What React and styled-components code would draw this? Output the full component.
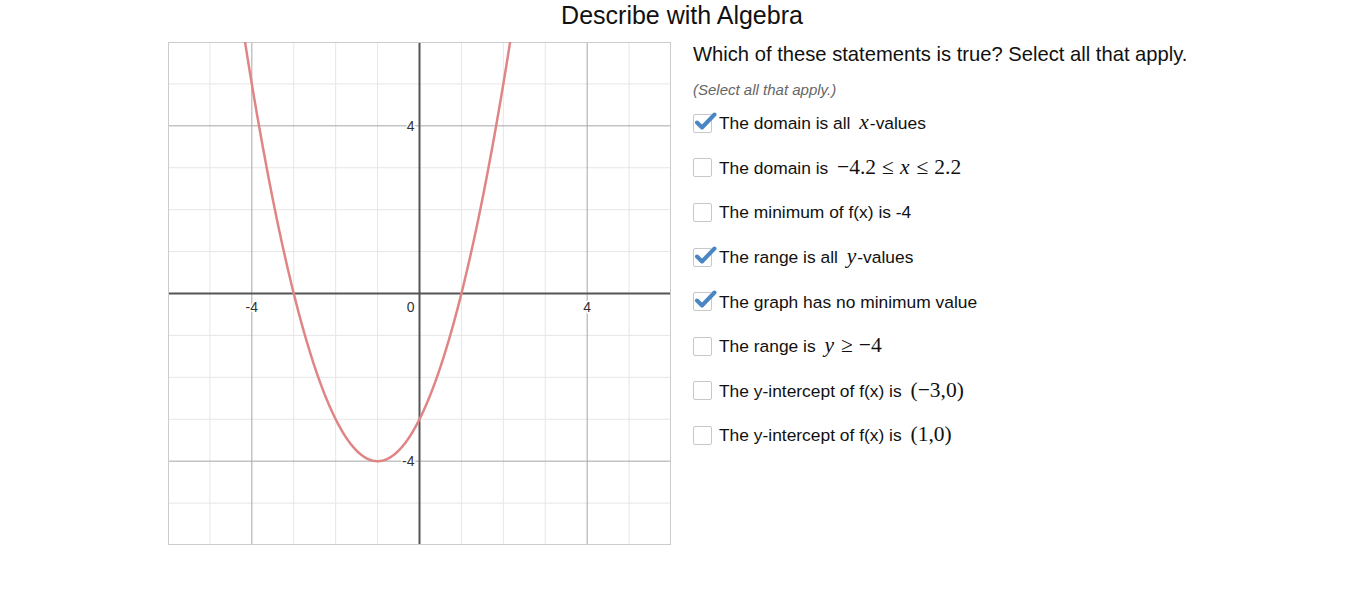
import React from 'react'
import styled, { createGlobalStyle } from 'styled-components'

const GlobalStyle = createGlobalStyle`
  body {
    margin: 0;
    background: #fff;
    font-family: "Liberation Sans", Arial, sans-serif;
    color: #111;
  }
`

const SIZE = 503
const UNIT = SIZE / 12
const px = x => (x + 6) * UNIT
const py = y => (6 - y) * UNIT

const curve = () => {
  const pts = []
  for (let x = -6; x <= 6.001; x += 0.02) {
    const y = x * x + 2 * x - 3
    if (y > 6.5) continue
    pts.push(`${px(x).toFixed(2)},${py(y).toFixed(2)}`)
  }
  return 'M' + pts.join(' L')
}

const GraphBox = styled.svg`
  display: block;
  flex: none;
`

const Title = styled.h1`
  margin: 0;
  font-size: 25px;
  font-weight: normal;
  line-height: 30px;
  text-align: center;
  color: #111;
`

const Main = styled.div`
  display: flex;
  gap: 22px;
  padding: 12px 0 0 168px;
`

const Panel = styled.div`
  display: flex;
  flex-direction: column;
`

const Question = styled.div`
  font-size: 20.2px;
  line-height: 24px;
  color: #111;
`

const Hint = styled.div`
  font-size: 15px;
  line-height: 17px;
  font-style: italic;
  color: #666;
  margin-top: 15px;
`

const List = styled.div`
  display: flex;
  flex-direction: column;
  margin-top: 3px;
`

const Row = styled.div`
  display: flex;
  align-items: center;
  height: 44.6px;
`

const Box = styled.span`
  position: relative;
  flex: none;
  width: 17px;
  height: 17px;
  border: 1px solid #c8c8c8;
  border-radius: 2px;
  margin-right: 7px;
  background: #fff;
`

const Tick = styled.svg`
  position: absolute;
  left: -1px;
  top: -5px;
`

const Label = styled.span`
  font-size: 17.4px;
  line-height: 24px;
  color: #111;
  white-space: nowrap;
`

const MathText = styled.span`
  font-family: "Liberation Serif", "Times New Roman", serif;
  font-size: 21.5px;
  line-height: 20px;
  margin-left: 4px;
`

const Var = styled.i`
  font-family: "Liberation Serif", "Times New Roman", serif;
  margin-right: 1px;
`

const Rel = styled.span`
  margin: 0 6px;
`

const items = [
  { checked: true, text: 'The domain is all ', math: <Var>x</Var>, after: '-values' },
  { checked: false, text: 'The domain is ', math: <>−4.2<Rel>≤</Rel><Var>x</Var><Rel>≤</Rel>2.2</> },
  { checked: false, text: 'The minimum of f(x) is -4' },
  { checked: true, text: 'The range is all ', math: <Var>y</Var>, after: '-values' },
  { checked: true, text: 'The graph has no minimum value' },
  { checked: false, text: 'The range is ', math: <><Var>y</Var><Rel>≥</Rel>−4</> },
  { checked: false, text: 'The y-intercept of f(x) is ', math: <>(−3,0)</> },
  { checked: false, text: 'The y-intercept of f(x) is ', math: <>(1,0)</> },
]

const Graph = () => {
  const ticks = []
  for (let i = -6; i <= 6; i++) ticks.push(i)
  return (
    <GraphBox viewBox={`0 0 ${SIZE} ${SIZE}`} width={SIZE} height={SIZE}>
      {ticks.filter(i => i % 4 !== 0).map(i => (
        <g key={'m' + i} stroke="#e6e6e6" strokeWidth="1">
          <line x1={px(i)} y1="0" x2={px(i)} y2={SIZE} />
          <line x1="0" y1={py(i)} x2={SIZE} y2={py(i)} />
        </g>
      ))}
      {[-4, 4].map(i => (
        <g key={'M' + i} stroke="#a6a6a6" strokeWidth="1">
          <line x1={px(i)} y1="0" x2={px(i)} y2={SIZE} />
          <line x1="0" y1={py(i)} x2={SIZE} y2={py(i)} />
        </g>
      ))}
      <g stroke="#555" strokeWidth="2">
        <line x1={px(0)} y1="0" x2={px(0)} y2={SIZE} />
        <line x1="0" y1={py(0)} x2={SIZE} y2={py(0)} />
      </g>
      <rect x="0.5" y="0.5" width={SIZE - 1} height={SIZE - 1} fill="none" stroke="#ccc" />
      <g
        fontFamily="Liberation Sans, Arial, sans-serif"
        fontSize="14"
        fill="#333"
        stroke="#fff"
        strokeWidth="3"
        paintOrder="stroke"
      >
        <text x={px(-4)} y={py(0) + 18} textAnchor="middle">-4</text>
        <text x={px(4)} y={py(0) + 18} textAnchor="middle">4</text>
        <text x={px(0) - 5} y={py(0) + 18} textAnchor="end">0</text>
        <text x={px(0) - 5} y={py(4) + 5} textAnchor="end">4</text>
        <text x={px(0) - 5} y={py(-4) + 5} textAnchor="end">-4</text>
      </g>
      <path d={curve()} fill="none" stroke="#e08585" strokeWidth="2.5" />
    </GraphBox>
  )
}

const Check = ({ checked }) => (
  <Box>
    {checked && (
      <Tick viewBox="0 0 24 22" width="24" height="22">
        <path d="M4 12.5 L9 17.5 L21.5 4.5" fill="none" stroke="#4a86c4" strokeWidth="4" strokeLinecap="round" strokeLinejoin="round" />
      </Tick>
    )}
  </Box>
)

const App = () => (
  <>
    <GlobalStyle />
    <Title>Describe with Algebra</Title>
    <Main>
      <Graph />
      <Panel>
        <Question>Which of these statements is true? Select all that apply.</Question>
        <Hint>(Select all that apply.)</Hint>
        <List>
          {items.map((it, i) => (
            <Row key={i}>
              <Check checked={it.checked} />
              <Label>
                {it.text}
                {it.math && <MathText>{it.math}</MathText>}
                {it.after}
              </Label>
            </Row>
          ))}
        </List>
      </Panel>
    </Main>
  </>
)

export default App
